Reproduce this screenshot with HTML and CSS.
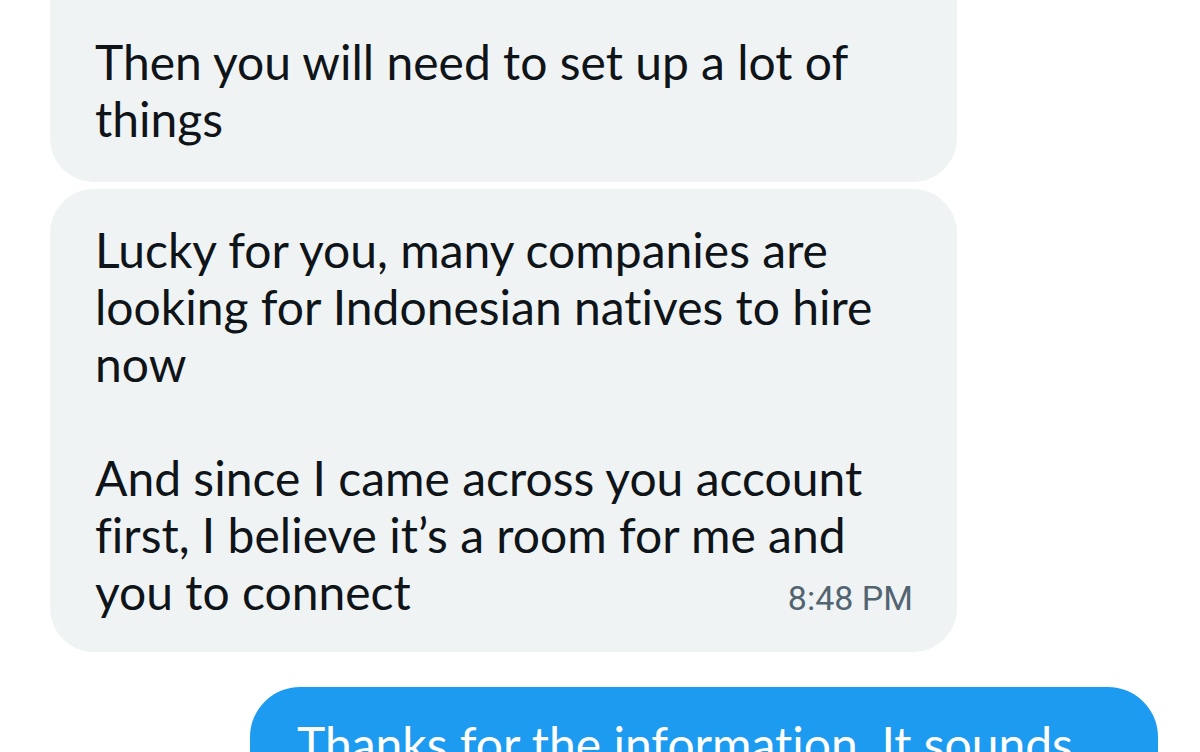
FILE: index.html
```html
<!DOCTYPE html>
<html lang="en">
<head>
<meta charset="utf-8">
<title>Chat</title>
<link rel="stylesheet" href="styles.css">
</head>
<body>
<main class="thread">
  <div class="msg in first">
    <div class="line">Then you will need to set up a lot of</div>
    <div class="line">things</div>
  </div>
  <div class="msg in second">
    <div class="line">Lucky for you, many companies are</div>
    <div class="line">looking for Indonesian natives to hire</div>
    <div class="line">now</div>
    <div class="line blank">&nbsp;</div>
    <div class="line">And since I came across you account</div>
    <div class="line">first, I believe it’s a room for me and</div>
    <div class="line last"><span>you to connect</span><span class="time">8:48 PM</span></div>
  </div>
  <div class="msg out">
    <div class="line">Thanks for the information. It sounds</div>
  </div>
</main>
</body>
</html>
```

FILE: styles.css
```css
html, body {
  margin: 0;
  padding: 0;
  background: #ffffff;
  overflow: hidden;
  height: 752px;
}

.thread {
  display: flex;
  flex-direction: column;
  gap: 7px;
  font-family: "Lato", "Open Sans", sans-serif;
  font-size: 48px;
  line-height: 57px;
  font-variant-ligatures: none;
  color: #0f1419;
}

.msg {
  border-radius: 44px;
  box-sizing: border-box;
}

.in {
  background: #eff3f4;
  width: 907px;
  margin-left: 50px;
  padding: 0 44px 0 45px;
}

.first {
  margin-top: -40px;
  padding-top: 73px;
  padding-bottom: 35px;
}

.second {
  padding-top: 32px;
  padding-bottom: 32px;
}

.line {
  white-space: nowrap;
  height: 57px;
}

.last {
  display: flex;
  justify-content: space-between;
  align-items: baseline;
}

.time {
  font-family: "Roboto", "Liberation Sans", sans-serif;
  font-size: 34px;
  color: #536471;
}

.out {
  margin-top: 28px;
  margin-left: 250px;
  width: 908px;
  background: #1d9bf0;
  color: #ffffff;
  border-radius: 50px;
  padding: 28px 45px 30px 47px;
}
```
